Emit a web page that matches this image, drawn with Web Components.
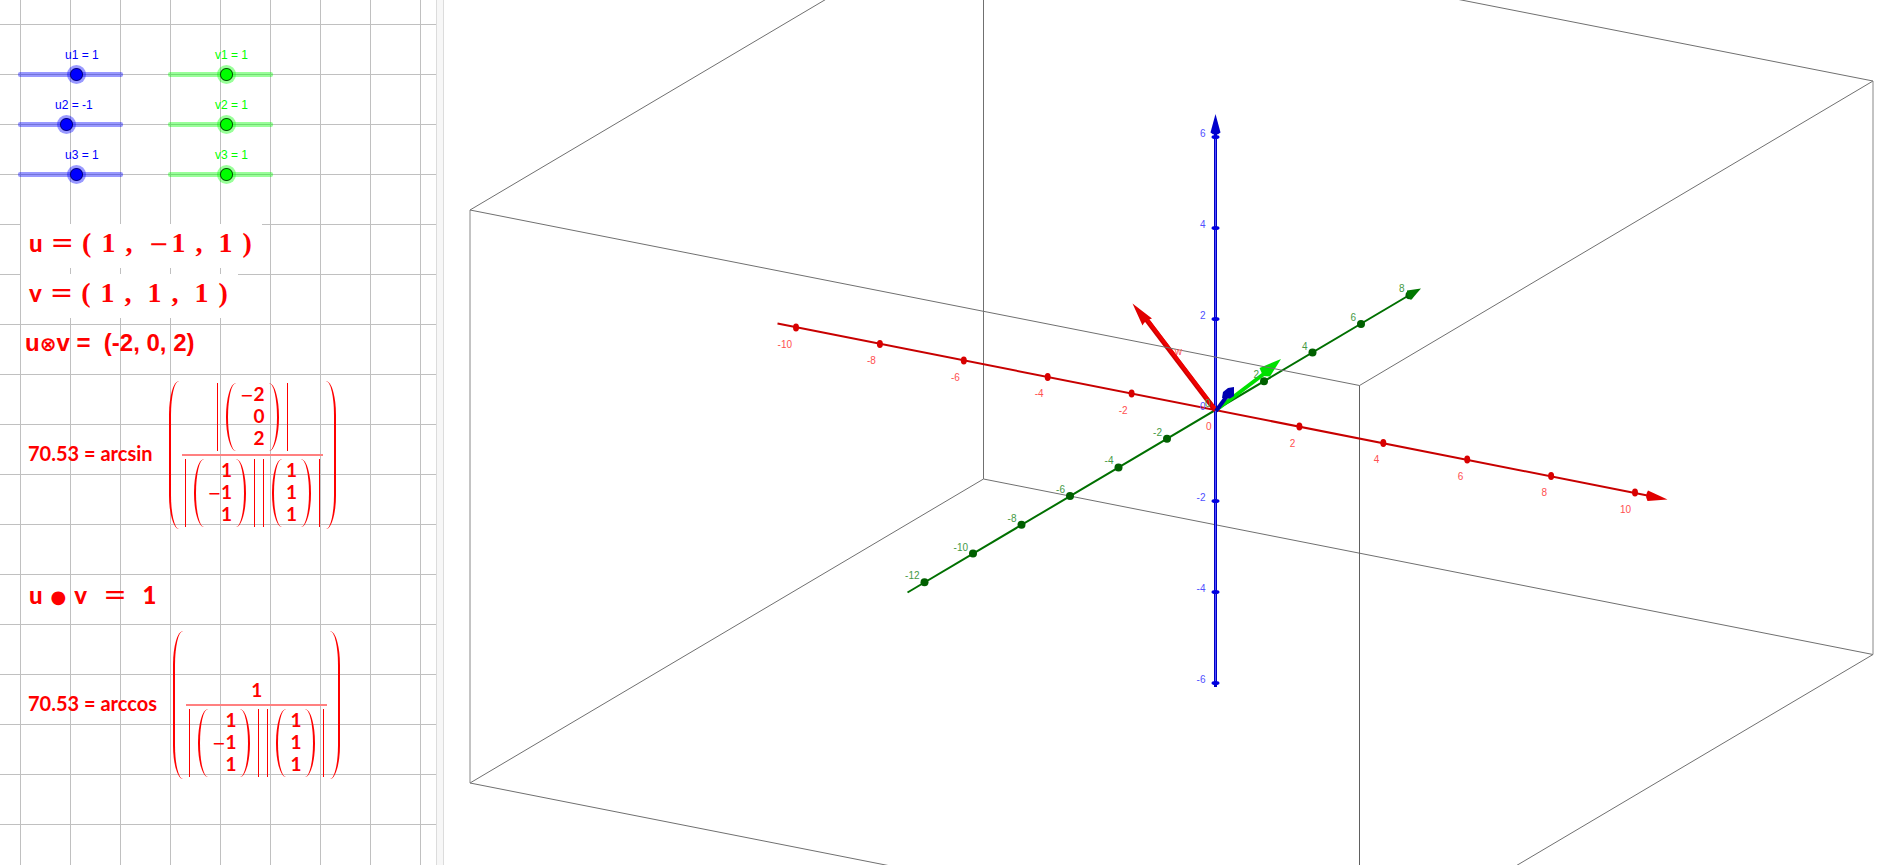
<!DOCTYPE html>
<html lang="en">
<head>
<meta charset="utf-8">
<title>Vector products</title>
<style>
    body {
        margin: 0;
        background: #fff;
        font-family: "Liberation Sans", Arial, sans-serif;
    }
</style>
</head>
<body>
<vector-app>
    <graphics-view slot="left">
        <slider-group slot="sliders">
            <value-slider name="u1" value="1"></value-slider>
            <value-slider name="v1" value="1" class="green"></value-slider>
            <value-slider name="u2" value="-1"></value-slider>
            <value-slider name="v2" value="1" class="green"></value-slider>
            <value-slider name="u3" value="1"></value-slider>
            <value-slider name="v3" value="1" class="green"></value-slider>
        </slider-group>
        <tuple-line name="u" values="1,-1,1"></tuple-line>
        <tuple-line name="v" values="1,1,1"></tuple-line>
        <cross-line>(-2, 0, 2)</cross-line>
        <angle-formula func="arcsin">
            <norm-bars slot="top"><column-vector values="-2,0,2"></column-vector></norm-bars>
        </angle-formula>
        <dot-line>1</dot-line>
        <angle-formula func="arccos"><span slot="top">1</span></angle-formula>
    </graphics-view>
    <space-view slot="right"></space-view>
</vector-app>

<script>
// "-1" is set with a real minus sign, drawn thinner than the digits
const signed = (value) => value.replace('-', '<span class="minus">−</span>');

class VectorApp extends HTMLElement {
    constructor() {
        super();
        this.attachShadow({ mode: 'open' });
        this.shadowRoot.innerHTML = `
        <style>
            :host {
                display: flex;
                height: calc(100vh - 2px);
                min-height: 800px;
                overflow: hidden;
            }

            .splitter {
                box-sizing: border-box;
                flex: 0 0 8px;
                background: #f7f7f7;
                border: solid #dcdcdc;
                border-width: 0 1px;
            }
        </style>
        <slot name="left"></slot>
        <div class="splitter"></div>
        <slot name="right"></slot>
        `;
    }
}

class GraphicsView extends HTMLElement {
    constructor() {
        super();
        this.attachShadow({ mode: 'open' });
        this.shadowRoot.innerHTML = `
        <style>
            :host {
                box-sizing: border-box;
                display: flex;
                flex-direction: column;
                align-items: flex-start;
                flex: 0 0 436px;
                padding: 48px 0 0 21px;
                color: #f00;
                background-image:
                    linear-gradient(to right, #c0c0c0 1px, transparent 1px),
                    linear-gradient(to bottom, #c0c0c0 1px, transparent 1px);
                background-size: 50px 50px;
                background-position: 20px 24px;
            }
        </style>
        <slot name="sliders"></slot>
        <slot></slot>
        `;
    }
}

class SliderGroup extends HTMLElement {
    constructor() {
        super();
        this.attachShadow({ mode: 'open' });
        this.shadowRoot.innerHTML = `
        <style>
            :host {
                display: grid;
                grid-template-columns: 150px 150px;
                row-gap: 21px;
                margin-left: -3px;
                margin-bottom: 47px;
            }
        </style>
        <slot></slot>
        `;
    }
}

class ValueSlider extends HTMLElement {
    constructor() {
        super();
        this.attachShadow({ mode: 'open' });
    }

    connectedCallback() {
        const name = this.getAttribute('name');
        const value = this.getAttribute('value');
        this.shadowRoot.innerHTML = `
        <style>
            :host {
                --text: #00f;
                --dot: #00f;
                --dot-edge: #000080;
                --line: rgba(0, 0, 255, 0.4);
                display: block;
                width: 105px;
            }

            :host(.green) {
                --text: #0f0;
                --dot: #0f0;
                --dot-edge: #005000;
                --line: rgba(0, 255, 0, 0.4);
            }

            label {
                display: block;
                margin-left: calc((var(--value) + 10) * 5px - 8px);
                font-size: 12px;
                line-height: 14px;
                white-space: nowrap;
                color: var(--text);
            }

            .track {
                display: flex;
                align-items: center;
                height: 5px;
                margin-top: 10px;
                border-radius: 2px;
                background: var(--line);
            }

            input {
                appearance: none;
                flex: none;
                width: 119px;
                height: 19px;
                margin: 0 0 0 -6px;
                background: none;
            }

            input::-webkit-slider-thumb {
                appearance: none;
                box-sizing: border-box;
                width: 19px;
                height: 19px;
                border-radius: 50%;
                background: radial-gradient(circle, var(--dot) 5px, var(--dot-edge) 6px, var(--line) 7px);
            }
        </style>
        <label for="range">${name} = ${value}</label>
        <div class="track"><input id="range" type="range" min="-10" max="10" value="${value}"></div>
        `;
        this.style.setProperty('--value', value);
        this.shadowRoot.querySelector('input').addEventListener('input', this._update.bind(this));
    }

    _update(event) {
        const value = event.target.value;
        this.style.setProperty('--value', value);
        this.shadowRoot.querySelector('label').textContent = `${this.getAttribute('name')} = ${value}`;
    }
}

class TupleLine extends HTMLElement {
    constructor() {
        super();
        this.attachShadow({ mode: 'open' });
    }

    connectedCallback() {
        const values = this.getAttribute('values').split(',')
            .map((value) => `<span class="number">${signed(value)}</span>`)
            .join('<span class="comma">,</span>');
        this.shadowRoot.innerHTML = `
        <style>
            :host {
                display: flex;
                align-items: baseline;
                gap: 10px;
                height: 44px;
                margin-bottom: 6px;
                padding: 0 10px 0 8px;
                background: #fff;
                font: bold 28px/38px "Liberation Serif", serif;
            }

            .name {
                font-family: Lato, sans-serif;
                font-size: 24px;
                font-weight: 900;
            }

            .equals, .minus {
                font-family: "DejaVu Sans", sans-serif;
                font-weight: normal;
            }

            .equals {
                margin: 0 -2px;
            }

            .minus {
                margin-right: 3px;
                font-size: 24px;
            }

            .comma {
                margin-right: 6px;
            }
        </style>
        <span class="name">${this.getAttribute('name')}</span>
        <span class="equals">=</span>
        <span>(</span>${values}<span>)</span>
        `;
    }
}

class CrossLine extends HTMLElement {
    constructor() {
        super();
        this.attachShadow({ mode: 'open' });
        this.shadowRoot.innerHTML = `
        <style>
            :host {
                display: block;
                height: 38px;
                margin: 0 0 19px 4px;
                font-size: 24px;
                font-weight: bold;
                line-height: 38px;
                white-space: nowrap;
            }

            .times {
                font-family: "DejaVu Sans", sans-serif;
                font-size: 20px;
                line-height: 20px;
            }
        </style>
        u<span class="times">⊗</span>v =&nbsp; <slot></slot>
        `;
    }
}

class DotLine extends HTMLElement {
    constructor() {
        super();
        this.attachShadow({ mode: 'open' });
        this.shadowRoot.innerHTML = `
        <style>
            :host {
                display: flex;
                align-items: baseline;
                gap: 8px;
                height: 44px;
                margin: 46px 0 12px 8px;
                font: 900 24px/40px Lato, sans-serif;
            }

            .dot {
                align-self: center;
                font-family: "DejaVu Sans", sans-serif;
                font-size: 18px;
                font-weight: normal;
            }

            .equals {
                margin: 0 8px;
                font-family: "DejaVu Sans", sans-serif;
                font-size: 28px;
                font-weight: normal;
            }
        </style>
        <span>u</span><span class="dot">●</span><span>v</span><span class="equals">=</span><slot></slot>
        `;
    }
}

// Parentheses that grow with what they enclose
class StretchParens extends HTMLElement {
    constructor() {
        super();
        this.attachShadow({ mode: 'open' });
        this.shadowRoot.innerHTML = `
        <style>
            :host {
                display: flex;
                align-items: stretch;
                gap: 3px;
            }

            .open, .close {
                box-sizing: border-box;
                width: 10px;
                border: 0 solid #f00;
            }

            .open {
                border-left-width: 2px;
                border-radius: 10px 0 0 10px / 34px 0 0 34px;
            }

            .close {
                border-right-width: 2px;
                border-radius: 0 10px 10px 0 / 0 34px 34px 0;
            }
        </style>
        <div class="open"></div>
        <slot></slot>
        <div class="close"></div>
        `;
    }
}

class ColumnVector extends HTMLElement {
    constructor() {
        super();
        this.attachShadow({ mode: 'open' });
    }

    connectedCallback() {
        const rows = this.getAttribute('values').split(',')
            .map((value) => `<div>${signed(value)}</div>`)
            .join('');
        this.shadowRoot.innerHTML = `
        <style>
            .rows {
                padding: 0 1px 2px;
                font: bold 19px/22px Lato, sans-serif;
                text-align: right;
            }

            .rows div {
                height: 22px;
            }

            .minus {
                font-family: "DejaVu Sans", sans-serif;
                font-size: 16px;
                font-weight: normal;
                line-height: 16px;
            }
        </style>
        <stretch-parens><div class="rows">${rows}</div></stretch-parens>
        `;
    }
}

class NormBars extends HTMLElement {
    constructor() {
        super();
        this.attachShadow({ mode: 'open' });
        this.shadowRoot.innerHTML = `
        <style>
            :host {
                display: block;
                padding: 0 8px;
                border: solid #f00;
                border-width: 0 1px;
            }
        </style>
        <slot></slot>
        `;
    }
}

class AngleFormula extends HTMLElement {
    constructor() {
        super();
        this.attachShadow({ mode: 'open' });
    }

    connectedCallback() {
        this.shadowRoot.innerHTML = `
        <style>
            :host {
                display: flex;
                align-items: center;
                gap: 16px;
                margin-left: 7px;
                font: bold 19px/22px Lato, sans-serif;
            }

            .result {
                padding-bottom: 4px;
                font-size: 20px;
            }

            .fraction {
                padding: 2px 0;
            }

            .top, .bottom {
                display: flex;
                justify-content: center;
                height: 68px;
            }

            .top {
                align-items: flex-end;
                padding-bottom: 3px;
                border-bottom: 2px solid #ff8080;
            }

            .bottom {
                gap: 8px;
                padding: 3px 3px 0;
            }
        </style>
        <span class="result">70.53 = ${this.getAttribute('func')}</span>
        <stretch-parens>
            <div class="fraction">
                <div class="top"><slot name="top"></slot></div>
                <div class="bottom">
                    <norm-bars><column-vector values="1,-1,1"></column-vector></norm-bars>
                    <norm-bars><column-vector values="1,1,1"></column-vector></norm-bars>
                </div>
            </div>
        </stretch-parens>
        `;
    }
}

class SpaceView extends HTMLElement {
    constructor() {
        super();
        this.attachShadow({ mode: 'open' });
    }

    connectedCallback() {
        this.shadowRoot.innerHTML = `
        <style>
            :host {
                display: block;
                flex: 1;
                min-width: 0;
            }

            svg {
                display: block;
                width: 100%;
                height: 100%;
                font: 10px "Liberation Sans", Arial, sans-serif;
            }

            .labels {
                text-anchor: end;
            }
        </style>
        <svg viewBox="444 0 1457 865" preserveAspectRatio="xMidYMin slice">
            <g fill="none" stroke="#707070">
                <path d="M983.5 -94V479L470 783M983.5 479L1873 654.5M470 210L983.5 -94L1873 81"/>
                <path d="M470 783L1359.5 958.5L1873 654.5M1359.5 385.5L1873 81"/>
                <path d="M470 210V783" stroke="#888"/>
                <path d="M1873 81V654.5" stroke="#888"/>
                <path d="M1359.5 385.5V867" stroke="#606060"/>
            </g>

            <path d="M777.5 323.5L1650 496" stroke="#c80000" stroke-width="2"/>
            <path d="M907.5 592.5L1412 293.5" stroke="#007000" stroke-width="2"/>
            ${this._ticks('x')}
            ${this._ticks('y')}
            <path d="M1667.5 499.5L1648 490.5Q1644.5 496 1647.5 501Z" fill="#e00000"/>
            <path d="M1421 288.5L1407 290.5Q1406 296 1411 300Z" fill="#007800"/>

            <path d="M1215.5 410.5L1265 373" stroke="#00e000" stroke-width="4"/>
            <path d="M1281 359L1259.5 368L1263 376L1270 376.5Z" fill="#00e000"/>

            <path d="M1215.5 130V687" stroke="#0000c0" stroke-width="3"/>
            <path d="M1215.5 136V685" stroke="#5050ff" stroke-width="1"/>
            ${this._ticks('z')}
            <path d="M1215.5 114L1210.5 132.5Q1215.5 137 1220.5 132.5Z" fill="#0000cc"/>

            <path d="M1215.5 410.5L1146 319" stroke="#d00000" stroke-width="5"/>
            <path d="M1215.5 409.5L1147 319" stroke="#f00000" stroke-width="3"/>
            <path d="M1132.5 303.5L1142.5 325.5Q1145 320 1152 318.5Z" fill="#e00000"/>
            <path d="M470 210L1359.5 385.5" stroke="#707070"/>
            <path d="M1216 411L1227 396" stroke="#0000a8" stroke-width="4"/>
            <path d="M1223 392L1228 388L1234 387V396L1230 398.5L1222 398Z" fill="#0000b0"/>

            <g class="labels">
                ${this._labels('x')}
                ${this._labels('y')}
                ${this._labels('z')}
                <text x="1182" y="355" fill="#ff5050">w</text>
            </g>
        </svg>
        `;
    }

    // Screen position of a value on one of the axes
    _project(axis, value) {
        const { step } = SpaceView.axes[axis];
        return [1215.5 + step[0] * value, 410 + step[1] * value];
    }

    _values(axis) {
        const { from, to } = SpaceView.axes[axis];
        const values = [];
        for (let value = from; value <= to; value += 2) {
            values.push(value);
        }
        return values;
    }

    _ticks(axis) {
        const { radius, fill } = SpaceView.axes[axis];
        return this._values(axis).filter((value) => value !== 0).map((value) => {
            const [x, y] = this._project(axis, value);
            return `<ellipse cx="${x}" cy="${y}" rx="${radius[0]}" ry="${radius[1]}" fill="${fill}"/>`;
        }).join('');
    }

    _labels(axis) {
        const { offset, text } = SpaceView.axes[axis];
        return this._values(axis).map((value) => {
            const [x, y] = this._project(axis, value);
            return `<text x="${x + offset[0]}" y="${y + offset[1]}" fill="${text}">${value}</text>`;
        }).join('');
    }
}

SpaceView.axes = {
    x: { from: -10, to: 10, step: [41.95, 8.25], radius: [3, 4], fill: '#d80000', offset: [-4, 20], text: '#ff5050' },
    y: { from: -12, to: 8, step: [24.25, -14.35], radius: [4, 4], fill: '#006000', offset: [-5, -3], text: '#459a45' },
    z: { from: -6, to: 6, step: [0, -45.5], radius: [4, 2], fill: '#0000e0', offset: [-10, 0], text: '#5050ff' }
};

customElements.define('vector-app', VectorApp);
customElements.define('graphics-view', GraphicsView);
customElements.define('slider-group', SliderGroup);
customElements.define('value-slider', ValueSlider);
customElements.define('tuple-line', TupleLine);
customElements.define('cross-line', CrossLine);
customElements.define('dot-line', DotLine);
customElements.define('stretch-parens', StretchParens);
customElements.define('column-vector', ColumnVector);
customElements.define('norm-bars', NormBars);
customElements.define('angle-formula', AngleFormula);
customElements.define('space-view', SpaceView);
</script>
</body>
</html>
